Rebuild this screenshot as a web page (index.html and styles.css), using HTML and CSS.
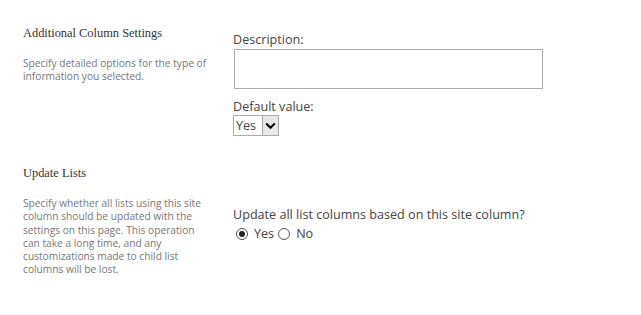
FILE: index.html
```html
<!DOCTYPE html>
<html>
<head>
<meta charset="utf-8">
<link rel="stylesheet" href="styles.css">
</head>
<body>
<div class="page">
  <section class="row row1">
    <div class="info">
      <h3 class="title">Additional Column Settings</h3>
      <p class="desc">Specify detailed options for the type of information you selected.</p>
    </div>
    <div class="field">
      <div class="label">Description:</div>
      <div class="textarea"></div>
      <div class="label label2">Default value:</div>
      <div class="select"><span class="sel-text">Yes</span><span class="sel-btn"><svg width="11" height="8" viewBox="0 0 11 8"><path d="M1.2 1.5 L5.5 5.8 L9.8 1.5" fill="none" stroke="#000" stroke-width="2"/></svg></span></div>
    </div>
  </section>
  <section class="row row2">
    <div class="info">
      <h3 class="title">Update Lists</h3>
      <p class="desc">Specify whether all lists using this site column should be updated with the settings on this page. This operation can take a long time, and any customizations made to child list columns will be lost.</p>
    </div>
    <div class="field field2">
      <div class="label">Update all list columns based on this site column?</div>
      <div class="radios">
        <span class="radio checked"></span><span class="rlabel">Yes</span>
        <span class="radio"></span><span class="rlabel">No</span>
      </div>
    </div>
  </section>
</div>
</body>
</html>
```
FILE: styles.css
```css
html, body { margin: 0; padding: 0; background: #fff; }
.page { padding: 26px 0 0 23px; }
.row { display: flex; }
.info { width: 189px; margin-right: 21px; }
.title { font-family: "Liberation Serif", serif; font-weight: normal; font-size: 12.4px; color: #333; margin: 0; line-height: 14px; }
.desc { font-family: "Open Sans", sans-serif; font-size: 10.2px; color: #777; margin: 17px 0 0 0; line-height: 13.3px; }
.field { padding-top: 6px; padding-left: 0; }
.label { font-family: "Open Sans", sans-serif; font-size: 12.6px; color: #444; line-height: 16px; }
.textarea { width: 307px; height: 38px; border: 1px solid #ababab; margin: 1px 0 10px 1px; }
.select { display: flex; width: 44px; height: 19px; border: 1px solid #ababab; margin-top: 0; }
.sel-text { font-family: "Open Sans", sans-serif; font-size: 12.6px; color: #444; line-height: 19px; padding-left: 2px; width: 26px; }
.sel-btn { flex: 1; background: #e8e8e8; border-left: 1px solid #ababab; display: flex; align-items: center; justify-content: center; }
.row2 { margin-top: 30px; }
.field2 { padding-top: 41px; }
.radios { display: flex; align-items: center; margin-top: 3px; padding-left: 3px; }
.radio { width: 12px; height: 12px; border: 1px solid #555; border-radius: 50%; box-sizing: border-box; display: flex; align-items: center; justify-content: center; }
.radio.checked::after { content: ""; width: 6px; height: 6px; border-radius: 50%; background: #222; }
.rlabel { font-family: "Open Sans", sans-serif; font-size: 12.6px; color: #444; margin: 0 4px 0 6px; line-height: 16px; }
```
